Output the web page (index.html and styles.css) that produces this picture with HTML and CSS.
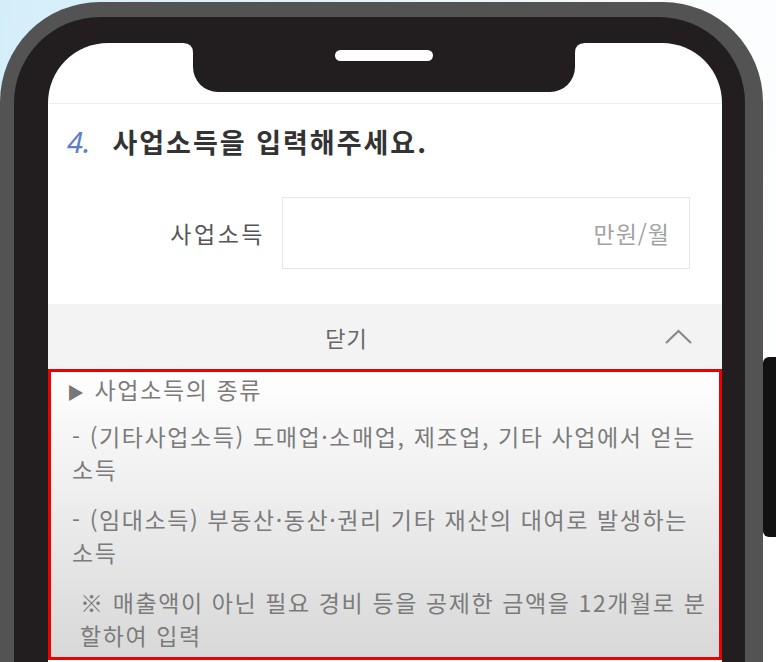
FILE: index.html
```html
<!DOCTYPE html>
<html lang="ko">
<head>
    <meta charset="UTF-8" />
    <meta name="viewport" content="width=device-width, initial-scale=1.0" />
    <title>사업소득 입력</title>
    <link rel="stylesheet" href="styles.css">
</head>
<body>
    <div class="phone">
        <div class="bezel">
            <div class="screen">
                <svg class="notch" width="402" height="49" viewBox="0 0 402 49">
                    <path d="M0 0 H402 Q392 0 392 10 V24 A25 25 0 0 1 367 49 H35 A25 25 0 0 1 10 24 V10 Q10 0 0 0 Z" fill="#221e1f" />
                    <rect x="152" y="7" width="98" height="11" rx="5.5" fill="#fff" />
                </svg>
                <div class="status"></div>

                <section class="question">
                    <h2 class="q-title"><span class="q-num">4.</span>사업소득을 입력해주세요.</h2>
                    <div class="field">
                        <label class="field-label" for="bizIncome">사업소득</label>
                        <input type="text" id="bizIncome" class="field-input" placeholder="만원/월" />
                    </div>
                </section>

                <div class="toggle">
                    <span class="toggle-label">닫기</span>
                    <svg class="chevron" width="27" height="15" viewBox="0 0 27 15">
                        <polyline points="1,14 13.5,2 26,14" fill="none" stroke="#8a8a8a" stroke-width="2.2" />
                    </svg>
                </div>

                <div class="info">
                    <p class="info-title"><span class="arrow">▶</span>사업소득의 종류</p>
                    <p>- (기타사업소득) 도매업·소매업, 제조업, 기타 사업에서 얻는 소득</p>
                    <p>- (임대소득) 부동산·동산·권리 기타 재산의 대여로 발생하는 소득</p>
                    <p class="note">※ 매출액이 아닌 필요 경비 등을 공제한 금액을 12개월로 분할하여 입력</p>
                </div>
            </div>
        </div>
        <div class="side-button"></div>
    </div>
</body>
</html>
```

FILE: styles.css
```css
html,
body {
    height: 100%;
}

body {
    margin: 0;
    overflow: hidden;
    font-family: "Noto Sans CJK KR", "Noto Sans", sans-serif;
    background: linear-gradient(100deg, #d4eef9 0%, #e3f3fa 40%, #f9fcfd 75%, #ffffff 100%);
}

.phone {
    position: relative;
    width: 763px;
    height: 720px;
    box-sizing: border-box;
    margin-top: 2px;
    padding: 15px 18px 0 14px;
    background: #535353;
    border-radius: 100px 100px 0 0;
}

.bezel {
    height: 100%;
    box-sizing: border-box;
    padding: 26px 23px 0 34px;
    background: #221e1f;
    border-radius: 86px 86px 0 0;
}

.screen {
    position: relative;
    height: 100%;
    background: #fff;
    border-radius: 60px 60px 0 0;
    overflow: hidden;
}

.notch {
    position: absolute;
    top: 0;
    left: 135px;
}

.status {
    height: 60px;
    border-bottom: 1px solid #eeeeee;
}

.question {
    padding: 18px 32px 0 19px;
}

.q-title {
    margin: 0;
    font-size: 27px;
    line-height: 40px;
    font-weight: 700;
    color: #333;
    letter-spacing: 2px;
}

.q-num {
    margin-right: 22px;
    font-family: "Noto Sans", sans-serif;
    font-size: 29px;
    font-style: italic;
    font-weight: 400;
    color: #5b7fc9;
    letter-spacing: 0;
}

.field {
    display: flex;
    align-items: center;
    margin-top: 35px;
}

.field-label {
    width: 215px;
    box-sizing: border-box;
    padding-right: 17px;
    text-align: right;
    font-size: 23px;
    color: #555;
    letter-spacing: 2.5px;
}

.field-input {
    flex: 1;
    height: 72px;
    box-sizing: border-box;
    padding: 0 19px;
    border: 1px solid #e6e6e6;
    font-family: "Noto Sans CJK KR", "Noto Sans", sans-serif;
    font-size: 23px;
    color: #333;
    text-align: right;
    letter-spacing: 1px;
    outline: none;
}

.field-input::placeholder {
    color: #a2a2a2;
}

.toggle {
    display: flex;
    align-items: center;
    height: 65px;
    margin-top: 35px;
    padding-right: 30px;
    background: #f3f3f3;
}

.toggle-label {
    flex: 1;
    padding-right: 20px;
    text-align: center;
    font-size: 22px;
    color: #666;
    letter-spacing: 1px;
}

.info {
    height: 291px;
    box-sizing: border-box;
    padding: 1px 12px 0 21px;
    border: 3px solid #ec0000;
    background: linear-gradient(#ffffff, #d8d8d8);
    font-size: 23px;
    line-height: 33px;
    color: #7b7b7b;
    letter-spacing: 1.6px;
}

.info p {
    margin: 0 0 17px;
}

.info .info-title {
    margin-bottom: 12px;
}

.arrow {
    margin-left: -5px;
    margin-right: 9px;
    font-size: 17px;
    color: #777;
}

.info .note {
    padding-left: 8px;
}

.side-button {
    position: absolute;
    top: 355px;
    right: -13px;
    width: 13px;
    height: 180px;
    background: #111;
    border-radius: 6px 0 0 6px;
}
```
